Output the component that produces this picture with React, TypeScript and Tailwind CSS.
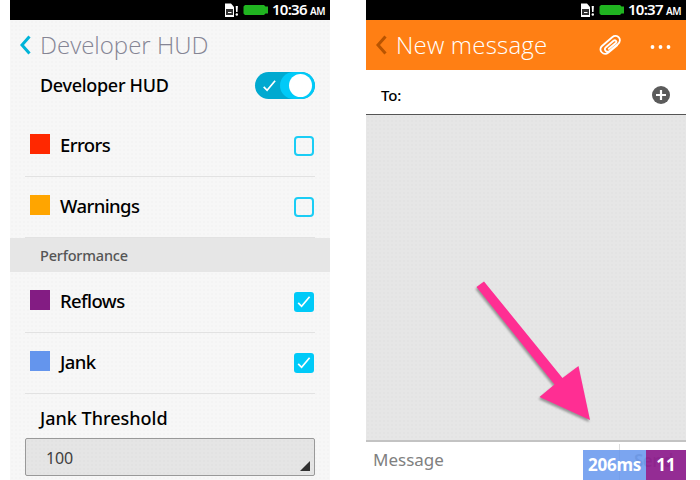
import React from "react";

const dots =
  "bg-[radial-gradient(circle,rgba(0,0,0,0.012)_0.7px,transparent_1px)] bg-[length:4px_4px]";

function StatusBar({ time }: { time: string }) {
  return (
    <div className="flex h-5 shrink-0 items-center justify-end bg-black pr-[5px] text-white">
      <svg width="14" height="15" viewBox="0 0 14 15" className="mr-[5px]">
        <path d="M1 0.500h6l3 3.500v10h-9z" fill="#fff" />
        <path d="M2 6h7v6H2z" fill="#333" />
        <path d="M4 9.500h3.500" stroke="#fff" strokeWidth="1" />
        <path d="M11.700 3h2.200l-.4 6h-1.400z" fill="#fff" />
        <circle cx="12.800" cy="11.500" r="1.200" fill="#fff" />
      </svg>
      <svg width="25" height="10" viewBox="0 0 25 10" className="mr-1">
        <path d="M2 0h19l1.500 1.500H25v7h-2.500L21 10H2L.5 8.500V1.500z" fill="#20b420" />
      </svg>
      <div className="flex h-5 w-[53px] items-baseline whitespace-nowrap">
        <span className="w-[38px] text-[15px] leading-[19px] font-semibold tracking-[-0.75px]">{time}</span>
        <span className="text-[10px] leading-[19px] font-semibold tracking-[-0.5px]">AM</span>
      </div>
    </div>
  );
}

function Tick({ className }: { className: string }) {
  return (
    <svg viewBox="0 0 14 14" className={className}>
      <path d="M1.200 7.800L4.600 11.300L12.600 1.700" fill="none" stroke="#fff" strokeWidth="1.700" />
    </svg>
  );
}

function Checkbox({ on }: { on: boolean }) {
  return on ? (
    <div className="mr-px flex h-5 w-5 items-center justify-center rounded-[3px] bg-[#00caf8]">
      <Tick className="h-[14px] w-[14px]" />
    </div>
  ) : (
    <div className="mr-px h-5 w-5 rounded-[4px] border-2 border-[#1bcdf5]" />
  );
}

function Row({ color, label, on }: { color: string; label: string; on: boolean }) {
  return (
    <div className="mx-[15px] flex h-[61px] shrink-0 items-center border-b border-[#e2e2e2] pl-[5px]">
      <div className={"mb-[5px] h-5 w-5 " + color} />
      <span className="mb-[2px] ml-[10px] flex-1 text-[18.500px] font-medium tracking-[-0.6px]">{label}</span>
      <Checkbox on={on} />
    </div>
  );
}

function Settings() {
  return (
    <div className="flex h-[480px] w-80 flex-col overflow-hidden bg-[#f7f7f7]">
      <StatusBar time="10:36" />
      <div className={"flex flex-1 flex-col " + dots}>
        <div className="flex h-[50px] shrink-0 items-center pl-[10px]">
          <svg width="11" height="20" viewBox="0 0 11 20">
            <path d="M9.500 1.500L2 10l7.500 8.500" fill="none" stroke="#00b4d8" strokeWidth="3" />
          </svg>
          <h1 className="ml-[9px] font-['Open_Sans'] text-[24px] font-light whitespace-nowrap text-[#858594]">Developer HUD</h1>
        </div>
        <div className="flex h-[46px] shrink-0 items-start justify-between pr-[15px] pl-[30px]">
          <span className="pt-[2px] text-[18px] font-medium tracking-[-0.3px]">Developer HUD</span>
          <div className="mt-[2px] flex h-[27px] w-[60px] items-center overflow-hidden rounded-full bg-[#00a9d0]">
            <Tick className="ml-[7px] h-[14px] w-[15px]" />
            <div className="ml-[3px] flex h-[27px] w-[35px] items-center justify-end rounded-full bg-[#00caf8] pr-[3px]">
              <div className="h-[23px] w-[23px] rounded-full bg-white" />
            </div>
          </div>
        </div>
        <Row color="bg-[#ff2800]" label="Errors" on={false} />
        <Row color="bg-[#ffa500]" label="Warnings" on={false} />
        <div className="flex h-[34px] shrink-0 items-center bg-[#e6e6e6] pl-[30px]">
          <span className="mt-px text-[14.500px] font-medium tracking-[-0.2px] text-[#555]">Performance</span>
        </div>
        <Row color="bg-[#831c83]" label="Reflows" on />
        <Row color="bg-[#6495ed]" label="Jank" on />
        <div className="h-11 shrink-0 pt-[11px] pl-[30px] text-[18px] leading-[27px] font-medium">Jank Threshold</div>
        <div className={"mx-[15px] flex h-[38px] shrink-0 items-center justify-between rounded-[2px] border border-[#999] bg-[#e5e5e5] pr-1 pl-5 " + dots}>
          <span className="mt-px text-[16px] tracking-[-0.2px] text-[#404040]">100</span>
          <svg width="10" height="10" className="mt-[18px]"><path d="M0 10L10 0V10z" fill="#303030" /></svg>
        </div>
      </div>
    </div>
  );
}

function Arrow() {
  return (
    <svg width="122" height="146" viewBox="0 0 122 146" className="mt-[163px] ml-[106px] overflow-visible drop-shadow-[-1px_2px_1px_rgba(0,0,0,0.35)]">
      <path d="M4.500 9L12 3.500L90.500 100L106.500 88L118 142L67.500 119L82.500 106.500z" fill="#ff2e93" />
    </svg>
  );
}

function Messages() {
  return (
    <div className="relative flex h-[480px] w-80 flex-col overflow-hidden bg-white">
      <StatusBar time="10:37" />
      <div className="flex h-[50px] shrink-0 items-center bg-[#ff7f14] pr-[15px] pl-[10px]">
        <svg width="11" height="20" viewBox="0 0 11 20">
          <path d="M9.500 1.500L2 10l7.500 8.500" fill="none" stroke="#b95400" strokeWidth="3" />
        </svg>
        <h1 className="ml-[9px] flex-1 font-['Open_Sans'] text-[24px] font-light tracking-[0.2px] whitespace-nowrap text-white">New message</h1>
        <svg width="24" height="22" viewBox="0 0 24 22" className="mr-7" fill="none" stroke="#fff" strokeWidth="1.800" strokeLinecap="round">
          <path d="M19.200 11.200L10.500 18.500C5.500 22.500-.5 16 4 12L14.200 3.200C19-.8 25 5.500 20 10L11.500 17C8.500 19.200 5.300 15.700 8 13.200L15.500 6.800C17.500 5.300 19.300 7.500 17.700 9L10.800 14.800" />
        </svg>
        <svg width="21" height="4" viewBox="0 0 21 4" fill="#fff" className="mt-[3px]">
          <circle cx="2.500" cy="2" r="1.900" /><circle cx="10.500" cy="2" r="1.900" /><circle cx="18.500" cy="2" r="1.900" />
        </svg>
      </div>
      <div className="flex h-[45px] shrink-0 items-center justify-between border-b border-[#555] pr-4 pl-[15px]">
        <span className="mt-[7px] text-[15px] font-medium tracking-[-0.2px]">To:</span>
        <svg width="18" height="18" viewBox="0 0 18 18" className="mt-[6px]">
          <circle cx="9" cy="9" r="9" fill="#5b5b5b" />
          <path d="M9 4v10M4 9h10" stroke="#fff" strokeWidth="2.200" />
        </svg>
      </div>
      <div className={"h-[327px] shrink-0 border-b-2 border-[#c3c3c3] bg-[#e6e6e6] " + dots}>
        <Arrow />
      </div>
      <div className="flex flex-1 justify-between pl-[7px]">
        <span className="pt-[6px] text-[17px] leading-6 text-[#808080]">Message</span>
        <div className="mt-[2px] w-[67px] border-l border-[#ddd] pt-[5px] pl-[14px] text-[17px] leading-6 font-semibold tracking-[-0.5px] text-[#aaa]">Send</div>
      </div>
      <div className="absolute right-0 bottom-0 flex h-[30px] text-[17px] font-bold text-white">
        <div className="flex w-[63px] items-center justify-center bg-[#6495ed]/85 tracking-[-0.3px]">206ms</div>
        <div className="flex w-10 items-center justify-center bg-[#8b1a8b]/92">11</div>
      </div>
    </div>
  );
}

export default function App() {
  return (
    <div className="flex h-[480px] w-[700px] gap-9 overflow-hidden bg-white pl-[10px] font-['Noto_Sans',sans-serif] text-black">
      <Settings />
      <Messages />
    </div>
  );
}
